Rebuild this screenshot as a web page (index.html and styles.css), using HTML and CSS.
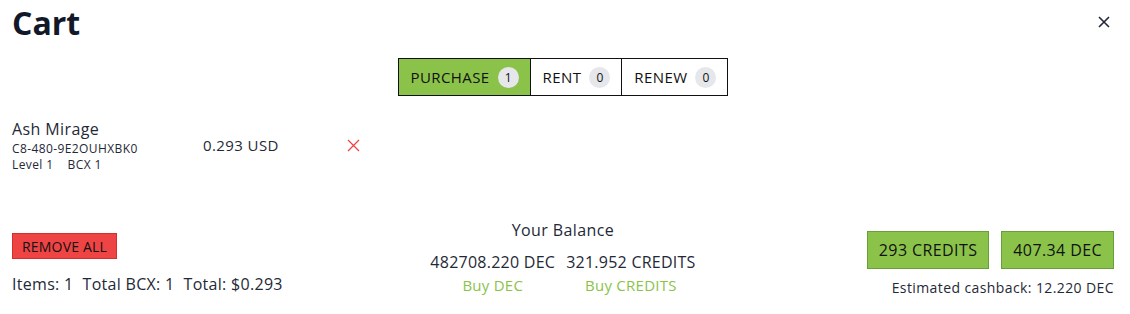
FILE: index.html
```html
<!DOCTYPE html>
<html lang="en">
<head>
    <meta charset="UTF-8">
    <meta name="viewport" content="width=device-width, initial-scale=1.0">
    <title>Cart</title>
    <link rel="stylesheet" href="styles.css">
</head>
<body>
    <div class="cart">
        <div class="cart-header">
            <h1>Cart</h1>
            <button class="close" aria-label="Close">
                <svg width="12" height="12" viewBox="0 0 12 12"><path d="M1 1L11 11M11 1L1 11" stroke="#1f2937" stroke-width="1.6" fill="none"/></svg>
            </button>
        </div>

        <div class="tabs">
            <div class="tab active">PURCHASE <span class="badge">1</span></div>
            <div class="tab">RENT <span class="badge">0</span></div>
            <div class="tab">RENEW <span class="badge">0</span></div>
        </div>

        <div class="item">
            <div class="item-info">
                <div class="item-name">Ash Mirage</div>
                <div class="item-small">C8-480-9E2OUHXBK0</div>
                <div class="item-small">Level 1 &nbsp;&nbsp; BCX 1</div>
            </div>
            <div class="item-price">0.293 USD</div>
            <button class="item-remove" aria-label="Remove">
                <svg width="13" height="13" viewBox="0 0 13 13"><path d="M1 1L12 12M12 1L1 12" stroke="#ef4444" stroke-width="1.3" fill="none"/></svg>
            </button>
        </div>

        <div class="cart-footer">
            <div class="summary">
                <button class="btn-remove">REMOVE ALL</button>
                <div class="totals">
                    <span>Items: 1</span>
                    <span>Total BCX: 1</span>
                    <span>Total: $0.293</span>
                </div>
            </div>
            <div class="balance">
                <div class="balance-title">Your Balance</div>
                <div class="balance-row">
                    <div class="balance-col">
                        <span>482708.220 DEC</span>
                        <a href="#">Buy DEC</a>
                    </div>
                    <div class="balance-col">
                        <span>321.952 CREDITS</span>
                        <a href="#">Buy CREDITS</a>
                    </div>
                </div>
            </div>
            <div class="pay">
                <div class="pay-buttons">
                    <button class="btn-pay">293 CREDITS</button>
                    <button class="btn-pay">407.34 DEC</button>
                </div>
                <div class="cashback">Estimated cashback: 12.220 DEC</div>
            </div>
        </div>
    </div>
</body>
</html>
```

FILE: styles.css
```css
body {
    margin: 0;
    padding: 0;
    font-family: "Open Sans", sans-serif;
    letter-spacing: 0.4px;
    color: #1f2937;
    background: #fff;
}

button {
    font-family: inherit;
    letter-spacing: inherit;
    cursor: pointer;
}

.cart {
    padding: 0 16px 0 12px;
}

.cart-header {
    display: flex;
    justify-content: space-between;
    align-items: center;
    height: 44px;
}

h1 {
    margin: 0;
    font-size: 32px;
    font-weight: 700;
    color: #111827;
    letter-spacing: 0;
}

.close {
    border: none;
    background: none;
    padding: 0;
    margin-right: 4px;
    display: flex;
}

.tabs {
    display: flex;
    justify-content: center;
    margin-top: 14px;
}

.tab {
    display: flex;
    align-items: center;
    gap: 8px;
    height: 36px;
    padding: 0 11px 0 12px;
    border: 1px solid #111;
    border-left: none;
    font-size: 15px;
    color: #111;
}

.tab:first-child {
    border-left: 1px solid #111;
}

.tab.active {
    background: #8bc34a;
}

.badge {
    display: inline-flex;
    align-items: center;
    justify-content: center;
    width: 21px;
    height: 21px;
    border-radius: 50%;
    background: #e5e7eb;
    font-size: 12px;
    letter-spacing: 0;
}

.item {
    display: flex;
    align-items: center;
    margin-top: 21px;
}

.item-info {
    width: 191px;
}

.item-name {
    font-size: 16px;
    line-height: 24px;
}

.item-small {
    font-size: 12px;
    line-height: 16px;
}

.item-price {
    width: 144px;
    font-size: 15px;
}

.item-remove {
    border: none;
    background: none;
    padding: 0;
    display: flex;
}

.cart-footer {
    display: grid;
    grid-template-columns: 1fr auto 1fr;
    align-items: end;
    margin-top: 46px;
}

.summary {
    display: flex;
    flex-direction: column;
    align-items: flex-start;
    gap: 14px;
    padding-bottom: 12px;
}

.btn-remove {
    background: #ef4444;
    border: 1px solid #d32f2f;
    color: #111;
    font-size: 14px;
    letter-spacing: 0.2px;
    height: 26px;
    padding: 0 9px;
}

.totals {
    display: flex;
    gap: 9px;
    font-size: 16px;
    letter-spacing: 0.3px;
}

.balance {
    display: flex;
    flex-direction: column;
    align-items: center;
    padding-bottom: 12px;
}

.balance-title {
    font-size: 16px;
    margin-bottom: 10px;
}

.balance-row {
    display: flex;
    gap: 11px;
    letter-spacing: 0.25px;
}

.balance-col {
    display: flex;
    flex-direction: column;
    align-items: center;
    gap: 2px;
    font-size: 16px;
}

.balance-col a {
    color: #8bc34a;
    text-decoration: none;
    font-size: 15px;
}

.pay {
    display: flex;
    flex-direction: column;
    align-items: flex-end;
    gap: 9px;
    padding-bottom: 10px;
}

.pay-buttons {
    display: flex;
    gap: 12px;
}

.btn-pay {
    background: #8bc34a;
    border: 1px solid #689f38;
    color: #111;
    font-size: 16px;
    height: 38px;
    padding: 0 11px;
}

.cashback {
    font-size: 14px;
}
```
